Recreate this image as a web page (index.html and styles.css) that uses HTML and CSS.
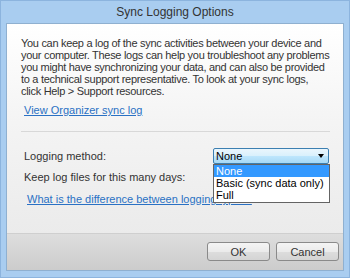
FILE: index.html
```html
<!DOCTYPE html>
<html lang="en">
<head>
    <meta charset="UTF-8">
    <title>Sync Logging Options</title>
    <link rel="stylesheet" href="styles.css">
</head>
<body>
    <div class="window">
        <div class="titlebar">Sync Logging Options</div>
        <div class="client">
            <div class="content">
                <p class="intro">You can keep a log of the sync activities between your device and<br>
                your computer. These logs can help you troubleshoot any problems<br>
                you might have synchronizing your data, and can also be provided<br>
                to a technical support representative. To look at your sync logs,<br>
                click Help &gt; Support resources.</p>
                <a class="link view-log" href="#">View Organizer sync log</a>
                <div class="separator"></div>
                <div class="row">
                    <span class="label">Logging method:</span>
                    <div class="select">
                        <span>None</span>
                        <span class="arrow"></span>
                        <ul class="options">
                            <li class="selected">None</li>
                            <li>Basic (sync data only)</li>
                            <li>Full</li>
                        </ul>
                    </div>
                </div>
                <div class="row">
                    <span class="label">Keep log files for this many days:</span>
                </div>
                <a class="link diff" href="#">What is the difference between logging types?</a>
            </div>
            <div class="footer">
                <button class="btn">OK</button>
                <button class="btn">Cancel</button>
            </div>
        </div>
    </div>
</body>
</html>
```

FILE: styles.css
```css
* {
    box-sizing: border-box;
}
body {
    margin: 0;
    font-family: "Liberation Sans", Arial, sans-serif;
    font-size: 11px;
    color: #333;
}
.window {
    width: 350px;
    height: 278px;
    background: #a9cdf0;
    border: 1px solid #8cb4de;
    padding: 0 5px 6px 5px;
    display: flex;
    flex-direction: column;
}
.titlebar {
    height: 22px;
    line-height: 23px;
    text-align: center;
    font-size: 12px;
    color: #333;
}
.client {
    flex: 1;
    display: flex;
    flex-direction: column;
    border: 1px solid #8fb0d0;
    background: linear-gradient(180deg, #ffffff 0%, #f4f4f4 40%, #e8e8e8 100%);
}
.content {
    flex: 1;
    padding: 13px 12px 0 14px;
}
.intro {
    margin: 0;
    line-height: 12px;
    letter-spacing: -0.3px;
    white-space: nowrap;
}
.link {
    display: inline-block;
    color: #2a71c4;
    line-height: 12px;
}
.view-log {
    margin: 7px 0 0 3px;
}
.separator {
    height: 1px;
    background: #d8d8d8;
    margin: 15px 1px 16px 0;
}
.row {
    display: flex;
    align-items: center;
    height: 16px;
    margin: 0 0 5px 3px;
}
.label {
    width: 189px;
}
.select {
    position: relative;
    width: 116px;
    height: 16px;
    border: 1px solid #3c7fb1;
    border-radius: 2px;
    background: linear-gradient(180deg, #eaf6fd 0%, #d9f0fc 50%, #bee6fd 51%, #a7d9f5 100%);
    color: #000;
    padding-left: 2px;
    line-height: 14px;
}
.arrow {
    position: absolute;
    right: 4px;
    top: 5px;
    border-left: 3px solid transparent;
    border-right: 3px solid transparent;
    border-top: 4px solid #000;
}
.options {
    position: absolute;
    left: -1px;
    top: 15px;
    width: 117px;
    margin: 0;
    padding: 0 0 1px 0;
    list-style: none;
    background: #fff;
    border: 1px solid #646464;
    z-index: 2;
}
.options li {
    height: 12px;
    line-height: 12px;
    padding-left: 2px;
}
.options .selected {
    background: #3399ff;
    color: #fff;
}
.diff {
    margin: 3px 0 0 6px;
}
.footer {
    height: 37px;
    border-top: 1px solid #cfcfcf;
    background: linear-gradient(180deg, #dedede 0%, #cccccc 100%);
    display: flex;
    justify-content: flex-end;
    align-items: flex-start;
    gap: 6px;
    padding: 8px 4px 0 0;
}
.btn {
    width: 63px;
    height: 19px;
    font-family: "Liberation Sans", Arial, sans-serif;
    font-size: 11px;
    color: #333;
    border: 1px solid #8a8a8a;
    border-radius: 3px;
    background: linear-gradient(180deg, #f4f4f4 0%, #ebebeb 50%, #dddddd 51%, #d4d4d4 100%);
    padding: 0;
}
```
